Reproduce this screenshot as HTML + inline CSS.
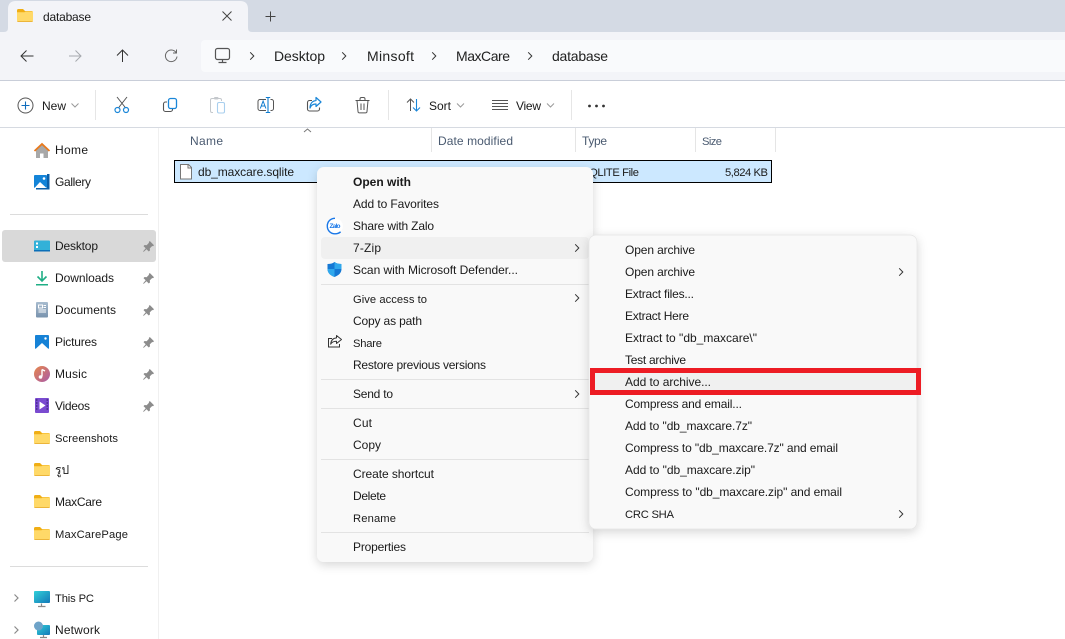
<!DOCTYPE html>
<html><head><meta charset="utf-8"><style>
html,body{margin:0;padding:0;background:#fff;width:1065px;height:639px;overflow:hidden}
svg{display:block}
text{font-family:"Liberation Sans","DejaVu Sans",sans-serif;font-size:12px;fill:#1a1a1a}
.h{fill:#4a5a70}
.a{font-size:14px;fill:#222}
text.s{font-size:11.2px}
</style></head><body>
<svg width="1065" height="639" viewBox="0 0 1065 639" xmlns="http://www.w3.org/2000/svg">
<defs>
<filter id="sh" x="-10%" y="-10%" width="120%" height="120%"><feDropShadow dx="0" dy="3" stdDeviation="5" flood-color="#000" flood-opacity=".16"/></filter>
<linearGradient id="mus" x1="0" y1="0" x2="1" y2="1"><stop offset="0" stop-color="#e8874a"/><stop offset="1" stop-color="#a85aa8"/></linearGradient>
<linearGradient id="pc" x1="0" y1="0" x2="1" y2="1"><stop offset="0" stop-color="#30d0d8"/><stop offset="1" stop-color="#1478b8"/></linearGradient>
<linearGradient id="doc" x1="0" y1="0" x2="0" y2="1"><stop offset="0" stop-color="#a8bccf"/><stop offset="1" stop-color="#7892ad"/></linearGradient>
<symbol id="fold" viewBox="0 0 16 13" overflow="visible"><path d="M0 1.500A1.500 1.500 0 0 1 1.500 0H6l2 2h6.500A1.500 1.500 0 0 1 16 3.500V6H0z" fill="#f0ae14"/><path d="M0 3.200h7.500L8.500 2.500H16V11.500a1.500 1.500 0 0 1-1.500 1.500h-13A1.500 1.500 0 0 1 0 11.500z" fill="#ffd968"/><path d="M0 12h16a1.500 1.500 0 0 1-1.500 1h-13A1.500 1.500 0 0 1 0 12z" fill="#ecb53a"/></symbol>
<symbol id="pin" viewBox="0 0 11 11" overflow="visible"><path d="M6.800 0L11 4.200 10 5.200 9.200 5 6.800 7.400 7 9.400 5.800 10.500 3.500 8.200.8 10.800 0 10.500 2.700 7.300.5 5.100 1.600 4 3.600 4.200 6 1.800 5.800 1z" fill="#8c8c8c"/></symbol>
<symbol id="chev" viewBox="0 0 6 10" overflow="visible"><path d="M1.200 1.300L4.800 5 1.200 8.700" fill="none" stroke="#333" stroke-width="1"/></symbol>
<symbol id="dn" viewBox="0 0 8 5" overflow="visible"><path d="M.5.500L4 4 7.500.5" fill="none" stroke="#9a9a9a" stroke-width="1"/></symbol>
</defs>

<!-- chrome -->
<rect width="1065" height="32" fill="#d4dae4"/>
<rect y="32" width="1065" height="48" fill="#f3f4f8"/>
<path d="M0 32H4Q8 32 8 28V9Q8 1 16 1H240Q248 1 248 9V28Q248 32 252 32H0z" fill="#f3f4f8"/>
<use href="#fold" x="17" y="9" width="16" height="13"/>
<text x="43" y="21" textLength="48">database</text>
<path d="M222.500 11.500l9 9m0-9l-9 9" stroke="#444" stroke-width="1" fill="none"/>
<path d="M270.500 11.500v10m-5-5h10" stroke="#444" stroke-width="1" fill="none"/>
<!-- nav -->
<path d="M33.500 56H21m5.500-5.500L21 56l5.500 5.500" stroke="#333" stroke-width="1" fill="none"/>
<path d="M69 56H81m-5.500-5.500L81 56l-5.500 5.500" stroke="#a5a9ae" stroke-width="1" fill="none"/>
<path d="M122.500 62V50m-5.500 5.500l5.500-5.500 5.500 5.500" stroke="#333" stroke-width="1" fill="none"/>
<path d="M176 52.500A5.800 5.800 0 1 0 177 56.500M176.500 49.500v3.500H173" stroke="#666" stroke-width="1" fill="none"/>
<rect x="201" y="40" width="880" height="32" rx="4" fill="#f9fafc"/>
<rect x="215.500" y="48.500" width="14" height="11" rx="2" fill="none" stroke="#555" stroke-width="1.200"/>
<path d="M222.500 60v2.500M218.500 62.500h8" stroke="#555" stroke-width="1.200"/>
<use href="#chev" x="249" y="51" width="6" height="10"/>
<use href="#chev" x="341" y="51" width="6" height="10"/>
<use href="#chev" x="431" y="51" width="6" height="10"/>
<use href="#chev" x="527" y="51" width="6" height="10"/>
<text class="a" x="274" y="61" textLength="51">Desktop</text>
<text class="a" x="367" y="61" textLength="47">Minsoft</text>
<text class="a" x="456" y="61" textLength="54">MaxCare</text>
<text class="a" x="552" y="61" textLength="56">database</text>
<rect y="80" width="1065" height="1" fill="#c9ced9"/>

<!-- command bar -->
<rect y="127" width="1065" height="1" fill="#d6dae1"/>
<circle cx="25.500" cy="105.500" r="7.500" fill="none" stroke="#555" stroke-width="1"/>
<path d="M25.500 101.500v8m-4-4h8" stroke="#0f6cbd" stroke-width="1.100"/>
<text x="42" y="110" textLength="24">New</text>
<use href="#dn" x="71" y="103" width="8" height="5"/>
<rect x="95" y="90" width="1" height="30" fill="#e6e6e6"/>
<!-- cut -->
<path d="M117 97l7.500 9.500 1 1.500M127 97l-7.500 9.500-1 1.500" stroke="#555" stroke-width="1" fill="none"/>
<circle cx="117.500" cy="110" r="2.500" fill="none" stroke="#1a86d8" stroke-width="1.200"/><circle cx="126" cy="110" r="2.500" fill="none" stroke="#1a86d8" stroke-width="1.200"/>
<!-- copy -->
<path d="M167 102h-1.500a2 2 0 0 0-2 2v5.500a2 2 0 0 0 2 2h5a2 2 0 0 0 2-2V108.500" fill="none" stroke="#555" stroke-width="1.100"/>
<rect x="168.500" y="98.500" width="8" height="10" rx="2" fill="none" stroke="#1a86d8" stroke-width="1.300"/>
<!-- paste -->
<path d="M213 112.500h-1a1.500 1.500 0 0 1-1.500-1.500v-11a1.500 1.500 0 0 1 1.500-1.500h8a1.500 1.500 0 0 1 1.500 1.500v1" fill="none" stroke="#c4c8cc" stroke-width="1"/>
<rect x="214" y="97" width="4.500" height="2.500" rx="1" fill="#c4c8cc"/>
<rect x="217.500" y="102.500" width="7" height="10.500" rx="1.500" fill="none" stroke="#a9cfee" stroke-width="1.100"/>
<!-- rename -->
<path d="M266 99.500h-6a2 2 0 0 0-2 2v7a2 2 0 0 0 2 2h6M270.500 99.500h1a2 2 0 0 1 2 2v7a2 2 0 0 1-2 2h-1" fill="none" stroke="#555" stroke-width="1"/>
<path d="M268 97.500v15m-2.200-15h4.400m-4.400 15h4.400" stroke="#0f7ccf" stroke-width="1.100" fill="none"/>
<path d="M260.300 108.500l2.800-7.500 2.800 7.500m-4.500-2.500h3.400" fill="none" stroke="#0f7ccf" stroke-width="1"/>
<!-- share -->
<path d="M312 100.500h-2.500a2 2 0 0 0-2 2v6.500a2 2 0 0 0 2 2h8a2 2 0 0 0 2-2v-1.500" fill="none" stroke="#555" stroke-width="1.100"/>
<path d="M316 97.500l5 4.500-5 4.500v-2.500c-3 0-5 1-6 4 0-4 2-7 6-7.500z" fill="none" stroke="#1a86d8" stroke-width="1.200" stroke-linejoin="round"/>
<!-- delete -->
<path d="M355.500 100.500h14M360 100.500v-1.500a1.500 1.500 0 0 1 1.500-1.500h2a1.500 1.500 0 0 1 1.500 1.500v1.500M357 100.500l1 11a1.500 1.500 0 0 0 1.500 1.400h6a1.500 1.500 0 0 0 1.500-1.400l1-11M361 103.500v6.500M364 103.500v6.500" fill="none" stroke="#555" stroke-width="1"/>
<rect x="388" y="90" width="1" height="30" fill="#e6e6e6"/>
<!-- sort -->
<path d="M410.500 111V99m-3.500 3.500l3.500-3.500 3.500 3.500" stroke="#555" stroke-width="1" fill="none"/>
<path d="M416.500 99v12m-3.500-3.500l3.500 3.500 3.500-3.500" stroke="#1a86d8" stroke-width="1.100" fill="none"/>
<text x="429" y="110" textLength="22">Sort</text>
<use href="#dn" x="456.500" y="103" width="8" height="5"/>
<path d="M492 100.500h16M492 103.500h16M492 106.500h16M492 109.500h16" stroke="#555" stroke-width="1"/>
<text x="516" y="110" textLength="25">View</text>
<use href="#dn" x="546.500" y="103" width="8" height="5"/>
<rect x="571" y="90" width="1" height="30" fill="#e6e6e6"/>
<circle cx="589.500" cy="106" r="1.400" fill="#333"/><circle cx="596.500" cy="106" r="1.400" fill="#333"/><circle cx="603.500" cy="106" r="1.400" fill="#333"/>

<!-- sidebar -->
<rect x="158" y="128" width="1" height="511" fill="#f0f0f0"/>
<rect x="2" y="230" width="154" height="32" rx="3" fill="#d9d9d9"/>
<rect x="10" y="214" width="138" height="1" fill="#dcdcdc"/>
<rect x="10" y="566" width="138" height="1" fill="#dcdcdc"/>
<!-- home -->
<path d="M36 150v8h4v-4.500h3.500V158H48v-8l-6-5.500z" fill="#a8a8a8"/>
<path d="M34.500 151l7.500-7 7.500 7" fill="none" stroke="#e8791c" stroke-width="1.800"/>
<!-- gallery -->
<rect x="34" y="175" width="13" height="13" rx="1" fill="#1484d8"/><path d="M47 174h2.500v15.500H36V188h11z" fill="#0c5fa8"/><path d="M34.500 188l5.500-6 6.500 6z" fill="#fff"/><circle cx="44" cy="178.500" r="1.300" fill="#fff"/>
<!-- desktop -->
<rect x="34" y="240.500" width="16" height="11" rx="1" fill="#33b1d8"/><rect x="34" y="250" width="16" height="1.500" fill="#0c6fb8"/><rect x="36" y="242.500" width="2" height="2" fill="#fff"/><rect x="36" y="246" width="2" height="2" fill="#fff"/>
<!-- downloads -->
<path d="M42 271v10m-4.500-4.500l4.500 4.500 4.500-4.500" stroke="#1fae85" stroke-width="1.600" fill="none"/><rect x="36" y="284" width="12" height="1.500" fill="#1fae85"/>
<!-- documents -->
<rect x="36" y="302" width="12" height="15.500" rx="1" fill="url(#doc)"/><path d="M38.500 305h4v3h-4zM43.500 305.500h2.500M43.500 307.500h2.500M38.500 310h7.500M38.500 312h7.500" stroke="#fff" stroke-width="1" fill="none"/>
<!-- pictures -->
<rect x="35" y="335" width="14" height="14" rx="1" fill="#1682d6"/><path d="M35.500 349l6.500-6 6.500 6z" fill="#fff"/><circle cx="45.500" cy="338.500" r="1.200" fill="#fff"/>
<!-- music -->
<circle cx="42" cy="374" r="8" fill="url(#mus)"/><path d="M42 369.500v7" stroke="#fff" stroke-width="1.400"/><path d="M42 369.500l3 1.500" stroke="#fff" stroke-width="1.400"/><circle cx="40.500" cy="377" r="1.800" fill="#fff"/>
<!-- videos -->
<rect x="35" y="398" width="14" height="15" rx="1" fill="#7a4bd0"/><path d="M39.500 401.500v8l6-4z" fill="#fff"/><path d="M36 400h1.500M36 403h1.500M36 406h1.500M36 409h1.500M46.500 400h1.500M46.500 403h1.500M46.500 406h1.500M46.500 409h1.500" stroke="#2a1a60" stroke-width="1"/>
<use href="#fold" x="34" y="431" width="16" height="13"/>
<use href="#fold" x="34" y="463" width="16" height="13"/>
<use href="#fold" x="34" y="495" width="16" height="13"/>
<use href="#fold" x="34" y="527" width="16" height="13"/>
<!-- this pc -->
<path d="M41.500 603.500v2.500M38 606.500h7.500" stroke="#8a8a8a" stroke-width="1.200"/><rect x="34" y="591" width="16" height="12" rx="1" fill="url(#pc)"/>
<!-- network -->
<rect x="37" y="625" width="13" height="10" rx="1" fill="url(#pc)"/><circle cx="38.500" cy="626" r="4.500" fill="#6ea3c8"/><path d="M43.500 635v2M40 637.500h7" stroke="#8a8a8a" stroke-width="1.200"/>
<path d="M14.500 594.500l3.500 3.500-3.500 3.500M14.500 626.500l3.500 3.500-3.500 3.500" fill="none" stroke="#8a8a8a" stroke-width="1.200"/>
<use href="#pin" x="143" y="241" width="11" height="11"/>
<use href="#pin" x="143" y="273" width="11" height="11"/>
<use href="#pin" x="143" y="305" width="11" height="11"/>
<use href="#pin" x="143" y="337" width="11" height="11"/>
<use href="#pin" x="143" y="369" width="11" height="11"/>
<use href="#pin" x="143" y="401" width="11" height="11"/>
<g>
<text x="55" y="154" textLength="33">Home</text>
<text x="55" y="186" textLength="36">Gallery</text>
<text x="55" y="250" textLength="43">Desktop</text>
<text x="55" y="282" textLength="59">Downloads</text>
<text x="55" y="314" textLength="61">Documents</text>
<text x="55" y="346" textLength="42">Pictures</text>
<text x="55" y="378" textLength="32">Music</text>
<text x="55" y="410" textLength="35">Videos</text>
<text class="s" x="55" y="442" textLength="63">Screenshots</text>
<text x="55" y="474">รูป</text>
<text x="55" y="506" textLength="47">MaxCare</text>
<text class="s" x="55" y="538" textLength="73">MaxCarePage</text>
<text class="s" x="55" y="602" textLength="39">This PC</text>
<text x="55" y="634" textLength="45">Network</text>
</g>

<!-- headers -->
<rect x="431" y="128" width="1" height="24" fill="#e5e5e5"/><rect x="575" y="128" width="1" height="24" fill="#e5e5e5"/><rect x="695" y="128" width="1" height="24" fill="#e5e5e5"/><rect x="775" y="128" width="1" height="24" fill="#e5e5e5"/>
<path d="M304 132l3.500-3 3.500 3" fill="none" stroke="#777" stroke-width="1"/>
<text class="h" x="190" y="145" textLength="33">Name</text>
<text class="h" x="438" y="145" textLength="75">Date modified</text>
<text class="h" x="582" y="145" textLength="25">Type</text>
<text class="h s" x="702" y="145" textLength="20">Size</text>

<!-- file row -->
<rect x="174.500" y="160.500" width="597" height="22" fill="#cce8ff" stroke="#000" stroke-width="1"/>
<path d="M180.500 164.500h8l3 3v11.500h-11z" fill="#fff" stroke="#777" stroke-width="1"/><path d="M188 164.500v3.500h3.500" fill="none" stroke="#777"/>
<text x="198" y="176" textLength="96">db_maxcare.sqlite</text>
<text class="s" x="582" y="176" textLength="57">SQLITE File</text>
<text class="s" x="725" y="176" textLength="43">5,824 KB</text>

<!-- main menu -->
<rect x="317" y="167" width="276" height="395" rx="7" fill="#f9f9f9" filter="url(#sh)"/>
<rect x="321" y="237" width="268" height="22" rx="4" fill="#f0f0f0"/>
<g fill="#e3e3e3"><rect x="321" y="284" width="268" height="1"/><rect x="321" y="379" width="268" height="1"/><rect x="321" y="408" width="268" height="1"/><rect x="321" y="459" width="268" height="1"/><rect x="321" y="532" width="268" height="1"/></g>
<text x="353" y="186" style="font-weight:700" textLength="58">Open with</text>
<text x="353" y="208" textLength="86">Add to Favorites</text>
<text x="353" y="230" textLength="81">Share with Zalo</text>
<text x="353" y="252" textLength="28">7-Zip</text>
<text x="353" y="274" textLength="165">Scan with Microsoft Defender...</text>
<text class="s" x="353" y="303" textLength="74">Give access to</text>
<text x="353" y="325" textLength="69">Copy as path</text>
<text class="s" x="353" y="347" textLength="29">Share</text>
<text x="353" y="369" textLength="133">Restore previous versions</text>
<text x="353" y="398" textLength="40">Send to</text>
<text x="353" y="427" textLength="19">Cut</text>
<text x="353" y="449" textLength="28">Copy</text>
<text x="353" y="478" textLength="81">Create shortcut</text>
<text x="353" y="500" textLength="33">Delete</text>
<text class="s" x="353" y="522" textLength="43">Rename</text>
<text x="353" y="551" textLength="53">Properties</text>
<use href="#chev" x="574" y="243" width="6" height="10"/>
<use href="#chev" x="574" y="293" width="6" height="10"/>
<use href="#chev" x="574" y="389" width="6" height="10"/>
<!-- zalo -->
<circle cx="335" cy="226" r="7.800" fill="#fff"/>
<path d="M335 218.300c-4.500 0-7.700 3.300-7.700 7.700 0 4.500 3.300 7.800 7.700 7.800 2.200 0 4.200-.7 5.600-2" fill="none" stroke="#1a78e8" stroke-width="1.400"/>
<text x="329.500" y="228" style="font-size:6.500px;font-weight:700;fill:#1a78e8" textLength="11">Zalo</text>
<!-- defender -->
<path d="M334.500 262c2 1.500 4.500 2 7 2v5c0 4-3 6.500-7 8-4-1.500-7-4-7-8v-5c2.500 0 5-.5 7-2z" fill="#1578d4"/><path d="M334.500 262c2 1.500 4.500 2 7 2v5h-7z" fill="#30a8ec"/><path d="M327.500 269h7v8c-4-1.500-7-4-7-8z" fill="#30a8ec"/>
<!-- share -->
<path d="M332 338.500h-3.500v8.500h11v-3" fill="none" stroke="#333" stroke-width="1"/>
<path d="M336.500 335.500l5 4-5 4v-2.300c-3 0-4.800.8-5.800 3 .3-3.800 2.300-6 5.800-6.300z" fill="#fafafa" stroke="#333" stroke-width="1" stroke-linejoin="round"/>

<!-- submenu -->
<rect x="589" y="235" width="328" height="294" rx="7" fill="#f9f9f9" stroke="#e4e4e4" stroke-width=".7" filter="url(#sh)"/>
<rect x="592.500" y="370.500" width="326" height="22" fill="#f0f0f0" stroke="#ed1c24" stroke-width="5"/>
<text x="625" y="254" textLength="70">Open archive</text>
<text x="625" y="276" textLength="70">Open archive</text>
<text x="625" y="298" textLength="69">Extract files...</text>
<text x="625" y="320" textLength="64">Extract Here</text>
<text x="625" y="342" textLength="132">Extract to "db_maxcare\"</text>
<text x="625" y="364" textLength="61">Test archive</text>
<text x="625" y="386" textLength="86">Add to archive...</text>
<text x="625" y="408" textLength="117">Compress and email...</text>
<text x="625" y="430" textLength="127">Add to "db_maxcare.7z"</text>
<text x="625" y="452" textLength="213">Compress to "db_maxcare.7z" and email</text>
<text x="625" y="474" textLength="130">Add to "db_maxcare.zip"</text>
<text x="625" y="496" textLength="217">Compress to "db_maxcare.zip" and email</text>
<text class="s" x="625" y="518" textLength="49">CRC SHA</text>
<use href="#chev" x="898" y="267" width="6" height="10"/>
<use href="#chev" x="898" y="509" width="6" height="10"/>
</svg>
</body></html>
